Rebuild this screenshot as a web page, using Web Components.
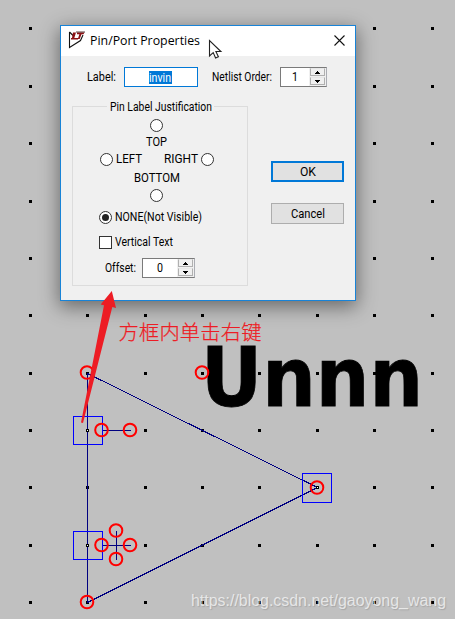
<!DOCTYPE html>
<html lang="zh-CN">
<head>
<meta charset="utf-8">
<title>Pin/Port Properties</title>
<style>
  body {
    margin: 0;
    background: #c0c0c0;
    overflow: hidden;
  }
</style>
</head>
<body>
<symbol-editor>
  <port-dialog></port-dialog>
</symbol-editor>

<script>
// Single line of text fitted to a given width
class FitText extends HTMLElement {
  constructor() {
    super();
    this.attachShadow({ mode: 'open' });
  }

  connectedCallback() {
    const width = this.getAttribute('width');
    const size = this.getAttribute('size') || '12';
    this.shadowRoot.innerHTML = `
      <style>
        :host { display: block; flex: none; width: ${width}px; height: 16px; }
        svg { display: block; overflow: visible; }
      </style>
      <svg width="${width}" height="16">
        <text x="0" y="12" font-size="${size}" fill="currentColor" textLength="${width}"
          lengthAdjust="spacingAndGlyphs">${this.textContent}</text>
      </svg>
    `;
  }
}

class RadioDot extends HTMLElement {
  constructor() {
    super();
    this.attachShadow({ mode: 'open' });
  }

  connectedCallback() {
    this.shadowRoot.innerHTML = `
      <style>
        :host { display: block; flex: none; width: 13px; height: 13px; }
        svg { display: block; }
      </style>
      <svg width="13" height="13">
        <circle cx="6.5" cy="6.5" r="6" fill="#fff" stroke="#333"/>
        ${this.hasAttribute('checked') ? '<circle cx="6.5" cy="6.5" r="3.5" fill="#222"/>' : ''}
      </svg>
    `;
  }
}

class NumberSpinner extends HTMLElement {
  constructor() {
    super();
    this.attachShadow({ mode: 'open' });
  }

  connectedCallback() {
    this.shadowRoot.innerHTML = `
      <style>
        :host {
          display: flex;
          flex: none;
          box-sizing: border-box;
          height: 20px;
          border: 1px solid #7a7a7a;
          border-right-color: #abadb3;
          background: #fff;
        }
        .value { flex: 1; display: flex; justify-content: center; align-items: center; }
        .buttons {
          width: 17px;
          box-sizing: border-box;
          display: grid;
          grid-template-rows: 1fr 1fr;
          gap: 1px;
          padding: 0 1px 1px;
          background: #f0f0f0;
        }
        .buttons span {
          display: flex;
          align-items: center;
          justify-content: center;
          border: 1px solid #b0b0b0;
          border-top-color: #e8e8e8;
          background: #f0f0f0;
        }
        svg { display: block; }
      </style>
      <div class="value"><fit-text width="6">${this.getAttribute('value')}</fit-text></div>
      <div class="buttons">
        <span><svg width="5" height="3"><path d="M2 0h1v1h1v1h1v1H0V2h1V1h1z"/></svg></span>
        <span><svg width="5" height="3"><path d="M0 0h5v1H4v1H3v1H2V2H1V1H0z"/></svg></span>
      </div>
    `;
  }
}

class DialogButton extends HTMLElement {
  constructor() {
    super();
    this.attachShadow({ mode: 'open' });
    this.shadowRoot.innerHTML = `
      <style>
        :host {
          display: flex;
          align-items: center;
          justify-content: center;
          box-sizing: border-box;
          width: 73px;
          height: 21px;
          background: #e1e1e1;
          border: 1px solid #adadad;
        }
        :host([primary]) { border: 2px solid #0078d7; }
      </style>
      <slot></slot>
    `;
  }
}

class GroupBox extends HTMLElement {
  constructor() {
    super();
    this.attachShadow({ mode: 'open' });
    this.shadowRoot.innerHTML = `
      <style>
        :host {
          display: block;
          box-sizing: border-box;
          width: 176px;
          height: 180px;
          border: 1px solid #dcdcdc;
        }
        header {
          width: 107px;
          height: 16px;
          margin: -8px 0 0 34px;
          padding-left: 3px;
          box-sizing: border-box;
          background: #f0f0f0;
        }
      </style>
      <header><slot name="caption"></slot></header>
      <slot></slot>
    `;
  }
}

class PortDialog extends HTMLElement {
  constructor() {
    super();
    this.attachShadow({ mode: 'open' });
  }

  connectedCallback() {
    this.shadowRoot.innerHTML = `
      <style>
        :host {
          display: block;
          box-sizing: border-box;
          width: 296px;
          height: 276px;
          border: 1px solid #1883d7;
          background: #f0f0f0;
          color: #000;
          font-family: Roboto, "Liberation Sans", sans-serif;
          box-shadow: 0 5px 18px 1px rgba(0, 0, 0, .45);
        }
        .title { display: flex; height: 30px; background: #fff; }
        .logo { margin: 5px 0 0 7px; }
        .title fit-text { margin: 7px 0 0 4px; font-family: "Open Sans", "Noto Sans", sans-serif; }
        .close { margin: 9px 0 0 134px; }
        .fields { display: flex; padding: 11px 0 0 26px; }
        .fields fit-text { margin-top: 2px; }
        .edit {
          display: flex;
          justify-content: center;
          align-items: center;
          box-sizing: border-box;
          width: 74px;
          height: 20px;
          margin: 0 14px 0 8px;
          border: 1px solid #0078d7;
          background: #fff;
        }
        .edit span { height: 13px; margin-right: 2px; padding: 0 1px 0 0; background: #0078d7; color: #fff; }
        .edit fit-text { margin-top: -1px; }
        .fields number-spinner { width: 47px; margin-left: 8px; }
        .main { display: flex; padding: 19px 0 0 11px; }
        .actions { display: grid; align-content: start; gap: 21px; padding: 55px 0 0 23px; }
        .row { display: flex; align-items: center; }
        .top { margin: 4px 0 0 77px; }
        .top-label { margin: 2px 0 0 73px; }
        .sides { margin: 1px 0 0 27px; }
        .sides fit-text:nth-child(2) { margin: 0 22px 0 3px; }
        .sides radio-dot:last-child { margin-left: 3px; }
        .bottom-label { margin: 3px 0 0 61px; }
        .bottom { margin: 3px 0 0 77px; }
        .none { margin: 7px 0 0 26px; gap: 3px; }
        .vertical { margin: 9px 0 0 26px; gap: 3px; }
        .check { width: 11px; height: 11px; border: 1px solid #333; background: #fff; }
        .offset { margin: 8px 0 0 32px; }
        .offset number-spinner { width: 53px; margin-left: 6px; }
      </style>
      <div class="title">
        <svg class="logo" width="18" height="18">
          <path d="M1.5 1V16.5L12.5 9.5L15 4M1.5 1L5 4.5" fill="none" stroke="#111" stroke-width="1.1"/>
          <path d="M5 1.5h3L6.3 7H10V8.5H3V7h1z" fill="#8b1014"/>
          <path d="M9 1.5h7.5l-1 1.8h-2L11.7 8h-1.9l1.6-4.7H9z" fill="#8b1014"/>
          <path d="M8 1h9" stroke="#301010" stroke-width=".8"/>
        </svg>
        <fit-text width="110">Pin/Port Properties</fit-text>
        <svg class="close" width="12" height="12">
          <path d="M.5 .5l10 10M10.5 .5l-10 10" stroke="#111" stroke-width="1.1"/>
        </svg>
      </div>
      <div class="fields">
        <fit-text width="29">Label:</fit-text>
        <div class="edit"><span><fit-text width="22">invin</fit-text></span></div>
        <fit-text width="60">Netlist Order:</fit-text>
        <number-spinner value="1"></number-spinner>
      </div>
      <div class="main">
        <group-box>
          <fit-text slot="caption" width="102">Pin Label Justification</fit-text>
          <radio-dot class="top"></radio-dot>
          <fit-text class="top-label" width="21">TOP</fit-text>
          <div class="row sides">
            <radio-dot></radio-dot>
            <fit-text width="26">LEFT</fit-text>
            <fit-text width="34">RIGHT</fit-text>
            <radio-dot></radio-dot>
          </div>
          <fit-text class="bottom-label" width="46">BOTTOM</fit-text>
          <radio-dot class="bottom"></radio-dot>
          <div class="row none">
            <radio-dot checked></radio-dot>
            <fit-text width="87">NONE(Not Visible)</fit-text>
          </div>
          <div class="row vertical">
            <div class="check"></div>
            <fit-text width="58">Vertical Text</fit-text>
          </div>
          <div class="row offset">
            <fit-text width="31">Offset:</fit-text>
            <number-spinner value="0"></number-spinner>
          </div>
        </group-box>
        <div class="actions">
          <dialog-button primary><fit-text width="16">OK</fit-text></dialog-button>
          <dialog-button><fit-text width="34">Cancel</fit-text></dialog-button>
        </div>
      </div>
    `;
  }
}

class SymbolEditor extends HTMLElement {
  constructor() {
    super();
    this.attachShadow({ mode: 'open' });
  }

  connectedCallback() {
    const cols = [29, 86, 144, 201, 258, 316, 373, 431];
    const rows = [27, 85, 142, 200, 257, 314, 372, 429, 486, 544, 601];
    const pins = [
      [87, 372.5], [202, 372.5], [101.5, 430], [130, 430], [317, 487.5],
      [116, 530.5], [116, 559], [101.5, 545], [130, 545], [87, 602]
    ];
    const grid = rows.map(y => cols.map(x => `M${x} ${y}h3v3h-3z`).join('')).join('');
    const circles = pins.map(([x, y]) => `<circle cx="${x}" cy="${y}" r="6.3"/>`).join('');

    this.shadowRoot.innerHTML = `
      <style>
        :host {
          display: block;
          position: relative;
          box-sizing: border-box;
          width: 455px;
          height: 619px;
          padding: 25px 0 0 60px;
          overflow: hidden;
        }
        svg { position: absolute; left: 0; top: 0; }
        ::slotted(*) { position: relative; }
        .name { font: bold 82px "DejaVu Sans", sans-serif; }
        .note { font: 300 20.3px "Noto Sans CJK SC", sans-serif; }
        .mark { font: 16px "Liberation Sans", sans-serif; }
      </style>
      <svg width="455" height="619">
        <text class="name" x="201" y="406" stroke="#000" stroke-width=".8"
          textLength="222" lengthAdjust="spacingAndGlyphs">Unnn</text>
        <path d="${grid}" shape-rendering="crispEdges"/>
        <g fill="none" stroke="#000080" shape-rendering="crispEdges">
          <path d="M87.5 373V602M87.5 373.5L317.5 487.5L87.5 602.5"/>
          <path d="M102 430.5H131M102 545.5H131M116.5 531V560"/>
        </g>
        <g fill="none" stroke="#0000ff" shape-rendering="crispEdges">
          <rect x="73.5" y="416.5" width="29" height="28"/>
          <rect x="73.5" y="531.5" width="29" height="28"/>
          <rect x="302.5" y="473.5" width="29" height="29"/>
        </g>
        <g fill="none" stroke="#ff0000" stroke-width="2">${circles}</g>
        <path d="M86 429h3v3h-3zM86 544h3v3h-3zM316 486h3v3h-3z" shape-rendering="crispEdges"/>
        <path d="M87 430h1v1h-1zM87 545h1v1h-1zM317 487h1v1h-1z" fill="#fff" shape-rendering="crispEdges"/>
      </svg>
      <slot></slot>
      <svg width="455" height="619">
        <path d="M111.8 291L116 308L112.3 307L83 423L81 422.5L104 305.3L100.7 304.5z" fill="#ed1c24"/>
        <text class="note" x="118.5" y="339.5" fill="#ed1c24" stroke="#ed1c24" stroke-width=".25"
          textLength="143">方框内单击右键</text>
        <path d="M209.5 40.5V56l3.7-3.4 2.4 5.4 2.8-1.2-2.5-5.3h5z" fill="#fff" stroke="#222" stroke-width="1.1"/>
        <text class="mark" x="191" y="606" fill="#fff" fill-opacity=".68" textLength="255"
          lengthAdjust="spacingAndGlyphs"
          style="text-shadow: 1px 1px 1px rgba(100, 100, 100, .4)">https://blog.csdn.net/gaoyong_wang</text>
      </svg>
    `;
  }
}

customElements.define('fit-text', FitText);
customElements.define('radio-dot', RadioDot);
customElements.define('number-spinner', NumberSpinner);
customElements.define('dialog-button', DialogButton);
customElements.define('group-box', GroupBox);
customElements.define('port-dialog', PortDialog);
customElements.define('symbol-editor', SymbolEditor);
</script>
</body>
</html>
